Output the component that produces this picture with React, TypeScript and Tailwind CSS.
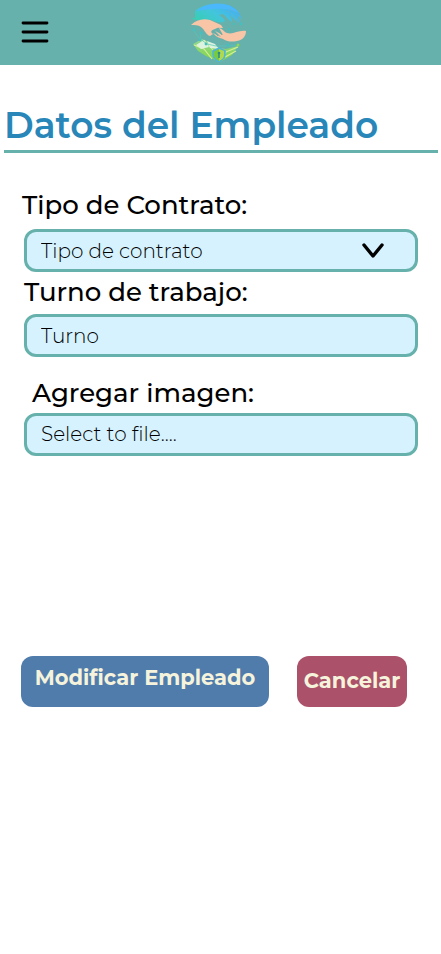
import type { ReactNode } from 'react';

const fieldClass =
  'block h-[43px] w-full rounded-xl border-3 border-[#67b1ac] bg-[#d5f2fe] px-[14px] text-xl font-light text-black outline-none focus-within:ring-2 focus-within:ring-[#2887b8]';

function Logo() {
  return (
    <svg viewBox="0 0 58 60" className="h-[60px] w-[58px]" role="img" aria-label="Inicio">
      <defs>
        <linearGradient id="upperHand" x1="0" y1="0.8" x2="1" y2="0.2">
          <stop offset="0" stopColor="#35d0ad" />
          <stop offset="0.5" stopColor="#43c5dc" />
          <stop offset="1" stopColor="#42a9fa" />
        </linearGradient>
        <linearGradient id="field" x1="0" y1="0" x2="0" y2="1">
          <stop offset="0" stopColor="#8ed79a" />
          <stop offset="1" stopColor="#86d63c" />
        </linearGradient>
      </defs>
      <path d="M5 16V9C12 3 22 1 31 2c10 0 17 5 21 15l-5-4 4 9-7-9c1 3 3 5 4 8l-8-8c1 3 2 5 2 7-4-2-6-6-9-8l-4 1c2 2 5 3 6 6-5 3-9 0-14-1-7-1-13 2-20-2z" fill="url(#upperHand)" />
      <path d="M6 9C14 2 28 0 38 3c5 2 9 5 11 8-8-4-17-5-25-4C18 7 12 8 6 9z" fill="#4bb8fb" />
      <path d="M36 9c6 1 9 6 13 11M39 7c6 2 9 6 12 10" fill="none" stroke="#63b1ce" strokeWidth="0.7" />
      <path d="M1 23c5-5 12-7 19-5l11 5 2 3c-3 0-5-1-8 1-4 1-5 3-2 5l-3 2c-4-1-5-6-9-9-3-2-6-2-10-2z" fill="#f8c5a7" />
      <path d="M56 29c-8-1-13 4-19 2-3-1-4-4-8-5l4 7-8-4 6 6-8-4c3 4 7 5 10 6 5 3 9 3 14 2 6-1 9-5 9-10z" fill="#f8c5a7" />
      <path d="M23 29l5 5M26 27l6 6" stroke="#69aaa4" strokeWidth="0.8" />
      <path d="M3 42l9-5 11 5 6 4 7 1 12-3-6 9-12 7-14-6-8-5z" fill="url(#field)" />
      <path d="M4 43l10 4 8 10M14 38l9 10M48 45l-12 5-4 7M46 49l-11 6" fill="none" stroke="#d9ee98" strokeWidth="1.1" />
      <path d="M6 43l8-5 5 7-8 2zM17 39l8 3 4 5-9-1z" fill="#dcf3df" />
      <path d="M4 29l5 7 8 6 9 2 12 0 10-1M11 31l-1 7" fill="none" stroke="#55c5b7" strokeWidth="0.7" />
      <g fill="#45bfc0">
        <circle cx="4" cy="28" r="1.4" /><circle cx="11" cy="31" r="1.6" /><circle cx="10" cy="38" r="1.3" />
        <circle cx="16" cy="42" r="1.4" /><circle cx="38" cy="43" r="1.6" /><circle cx="44" cy="22" r="1.2" />
        <circle cx="51" cy="22" r="1.4" /><circle cx="39" cy="27" r="1" />
      </g>
      <circle cx="48" cy="43" r="1.5" fill="#91d850" />
      <path d="M29 46l6 3v4c0 3-3 5-6 7-3-2-6-4-6-7v-4z" fill="#77ca42" stroke="#4eb4df" strokeWidth="1.5" />
      <path d="M29 47l5 2v4c0 3-2 4-5 6z" fill="#b0d850" />
      <path d="M29 51v5" stroke="#268d88" strokeWidth="1.5" />
      <circle cx="29" cy="51" r="1.3" fill="#268d88" />
    </svg>
  );
}

function FieldLabel({ htmlFor, className, children }: { htmlFor: string; className: string; children: ReactNode }) {
  return (
    <label htmlFor={htmlFor} className={`block text-[26px] leading-8 font-medium text-black ${className}`}>
      {children}
    </label>
  );
}

export default function App() {
  return (
    <div className="min-h-screen bg-white font-['Montserrat','Inter',sans-serif]">
      <header className="grid h-[65px] grid-cols-[1fr_auto_1fr] items-center bg-[#67b1ac] pr-6 pb-[2px] pl-[21px]">
        <button type="button" aria-label="Abrir menú" className="justify-self-start">
          <svg viewBox="0 0 28 24" className="h-6 w-7" fill="none" stroke="black" strokeWidth="2.8" strokeLinecap="round">
            <path d="M2 3h24M2 12h24M2 21h24" />
          </svg>
        </button>
        <Logo />
      </header>

      <main>
        <h1 className="mr-[3px] ml-1 border-b-3 border-[#67b1ac] pt-[38px] pb-[2px] text-4xl leading-[45px] font-semibold whitespace-nowrap text-[#2887b8]">
          Datos del Empleado
        </h1>

        <form className="pt-9 pr-[23px] pl-6" onSubmit={(event) => event.preventDefault()}>
          <FieldLabel htmlFor="contrato" className="-ml-[2px] mb-2">Tipo de Contrato:</FieldLabel>
          <div className="relative">
            <select id="contrato" defaultValue="" className={`${fieldClass} appearance-none`}>
              <option value="" disabled>Tipo de contrato</option>
              <option value="indefinido">Indefinido</option>
              <option value="temporal">Temporal</option>
            </select>
            <svg viewBox="0 0 22 16" className="pointer-events-none absolute top-[14px] right-[34px] h-4 w-[22px]" fill="none" stroke="black" strokeWidth="3.4" strokeLinecap="round" strokeLinejoin="round">
              <path d="M2 2l9 11 9-11" />
            </svg>
          </div>

          <FieldLabel htmlFor="turno" className="mt-1 mb-1.5">Turno de trabajo:</FieldLabel>
          <input id="turno" type="text" placeholder="Turno" className={`${fieldClass} placeholder:text-black`} />

          <FieldLabel htmlFor="imagen" className="mt-5 mb-1 pl-2">Agregar imagen:</FieldLabel>
          <label className={`${fieldClass} cursor-pointer leading-[37px]`}>
            Select to file....
            <input id="imagen" type="file" accept="image/*" className="sr-only" />
          </label>

          <div className="mt-[200px] mr-[11px] -ml-[3px] flex gap-7">
            <button type="submit" className="h-[51px] grow rounded-xl bg-[#507cac] pb-2 text-[21px] leading-7 font-bold whitespace-nowrap text-[#f5f3dc]">
              Modificar Empleado
            </button>
            <button type="button" className="h-[51px] w-[110px] rounded-xl bg-[#ab5169] pb-[2px] text-[21px] leading-7 font-bold text-[#f5f3dc]">
              Cancelar
            </button>
          </div>
        </form>
      </main>
    </div>
  );
}
